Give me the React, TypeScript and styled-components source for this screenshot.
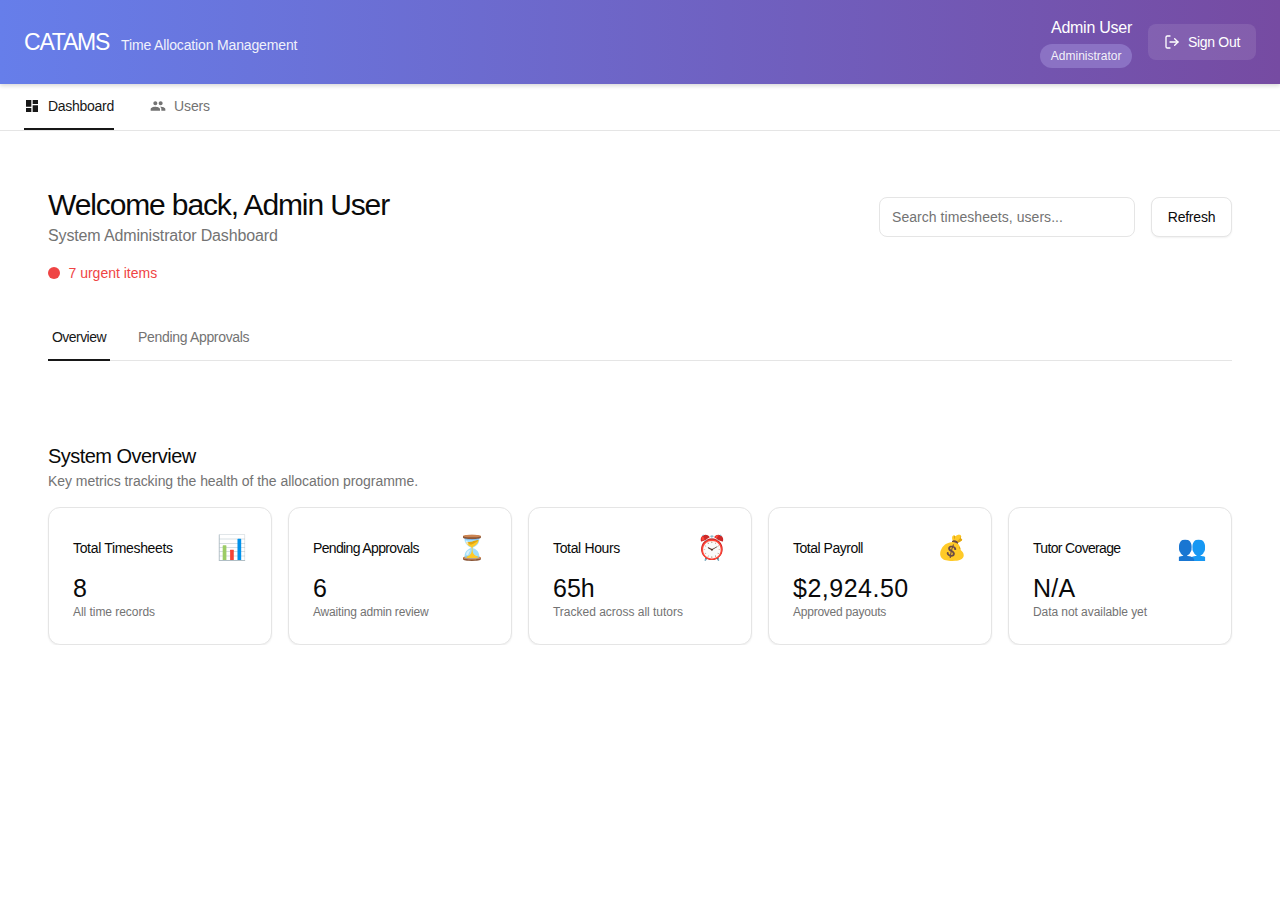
import React from 'react';
import styled, { createGlobalStyle } from 'styled-components';
import { MdDashboard, MdPeople } from 'react-icons/md';

const GlobalStyle = createGlobalStyle`
  *, *::before, *::after { box-sizing: border-box; }
  body {
    margin: 0;
    background: #fff;
    color: #0a0a0a;
    font-family: "Liberation Sans", Arial, sans-serif;
    font-size: 14px;
    line-height: 20px;
  }
  h1, h2, h3, p { margin: 0; font-weight: 400; }
  button, input { font: inherit; }
`;

interface Tracking {
  $track?: number;
}

const Header = styled.header`
  position: relative;
  display: flex;
  align-items: center;
  justify-content: space-between;
  height: 84px;
  padding: 0 24px;
  color: #fff;
  background: linear-gradient(90deg, #667eea 0%, #764ba2 100%);
  box-shadow: 0 2px 4px rgba(0, 0, 0, 0.15);
`;

const Brand = styled.div`
  display: flex;
  align-items: baseline;
  gap: 12px;
`;

const BrandName = styled.h1`
  font-size: 23px;
  line-height: 32px;
  letter-spacing: -1.23px;
`;

const Tagline = styled.span`
  letter-spacing: -0.146px;
  opacity: 0.9;
`;

const Account = styled.div`
  display: flex;
  align-items: center;
  gap: 16px;
`;

const Identity = styled.div`
  display: flex;
  flex-direction: column;
  align-items: flex-end;
  gap: 4px;
`;

const UserName = styled.span`
  font-size: 16px;
  line-height: 24px;
  height: 24px;
  letter-spacing: -0.258px;
`;

const RoleBadge = styled.span`
  display: flex;
  align-items: center;
  height: 24px;
  padding: 0 10.5px;
  border-radius: 12px;
  font-size: 12px;
  color: rgba(255, 255, 255, 0.92);
  background: #8b72c4;
`;

const SignOutButton = styled.button`
  display: flex;
  align-items: center;
  gap: 8px;
  width: 108px;
  height: 36px;
  padding: 0 16px;
  border: 0;
  border-radius: 8px;
  color: #fff;
  white-space: nowrap;
  letter-spacing: -0.309px;
  background: rgba(255, 255, 255, 0.1);
`;

const Nav = styled.nav`
  display: flex;
  gap: 36px;
  height: 47px;
  padding: 0 24px;
  border-bottom: 1px solid #e5e5e5;
`;

const NavItem = styled.a<Tracking & { $active?: boolean }>`
  display: flex;
  align-items: center;
  gap: 8px;
  height: 46px;
  border-bottom: 2px solid ${(p) => (p.$active ? '#171717' : 'transparent')};
  color: ${(p) => (p.$active ? '#171717' : '#737373')};
  letter-spacing: ${(p) => p.$track ?? 0}px;
`;

const Main = styled.main`
  padding: 56px 48px 0;
`;

const PageHeader = styled.section`
  display: flex;
  justify-content: space-between;
  align-items: flex-start;
`;

const PageTitle = styled.h2`
  font-size: 30px;
  line-height: 36px;
  letter-spacing: -1.12px;
`;

const PageSubtitle = styled.p`
  font-size: 16px;
  line-height: 25px;
  color: #737373;
  letter-spacing: -0.14px;
`;

const UrgentNotice = styled.div`
  display: flex;
  align-items: center;
  gap: 8.5px;
  margin-top: 15px;
  color: #ef4444;
`;

const UrgentDot = styled.span`
  width: 12px;
  height: 12px;
  border-radius: 50%;
  background: #ef4444;
`;

const Actions = styled.div`
  display: flex;
  gap: 16px;
  margin-top: 10px;
`;

const SearchInput = styled.input`
  width: 256px;
  height: 40px;
  padding: 0 12px;
  border: 1px solid #e5e5e5;
  border-radius: 8px;
  background: #fff;
  letter-spacing: 0.05px;
  &::placeholder { color: #737373; }
`;

const RefreshButton = styled.button`
  width: 81px;
  height: 40px;
  padding: 0;
  border: 1px solid #e5e5e5;
  border-radius: 8px;
  color: #0a0a0a;
  background: #fff;
  letter-spacing: -0.217px;
  box-shadow: 0 1px 2px rgba(0, 0, 0, 0.06);
`;

const Tabs = styled.div`
  display: flex;
  gap: 24px;
  height: 48px;
  margin-top: 30px;
  border-bottom: 1px solid #e5e5e5;
`;

const Tab = styled.button<Tracking & { $active?: boolean }>`
  height: 48px;
  padding: 2px 4px 0;
  border: 0;
  border-bottom: 2px solid ${(p) => (p.$active ? '#171717' : 'transparent')};
  background: none;
  color: ${(p) => (p.$active ? '#171717' : '#737373')};
  letter-spacing: ${(p) => p.$track ?? 0}px;
`;

const Overview = styled.section`
  margin-top: 81px;
`;

const SectionTitle = styled.h2`
  font-size: 20px;
  line-height: 28px;
  letter-spacing: -0.53px;
`;

const SectionText = styled.p`
  margin-top: 1px;
  color: #737373;
  letter-spacing: -0.046px;
`;

const MetricGrid = styled.div`
  display: grid;
  grid-template-columns: repeat(5, 1fr);
  gap: 16px;
  margin-top: 16px;
`;

const MetricCard = styled.article`
  height: 138px;
  padding: 24px;
  border: 1px solid #e5e5e5;
  border-radius: 12px;
  background: #fff;
  box-shadow: 0 1px 2px rgba(0, 0, 0, 0.07);
`;

const MetricHead = styled.div`
  display: flex;
  align-items: center;
  justify-content: space-between;
  height: 32px;
`;

const MetricName = styled.h3<Tracking>`
  font-size: 14px;
  letter-spacing: ${(p) => p.$track ?? 0}px;
`;

const MetricIcon = styled.span`
  font-size: 24px;
  line-height: 32px;
`;

const MetricValue = styled.div<Tracking>`
  margin-top: 8px;
  font-size: 25px;
  line-height: 32px;
  letter-spacing: ${(p) => p.$track ?? 0}px;
`;

const MetricNote = styled.p<Tracking>`
  font-size: 12px;
  line-height: 16px;
  color: #737373;
  letter-spacing: ${(p) => p.$track ?? 0}px;
`;

const metrics = [
  { name: 'Total Timesheets', icon: '📊', value: '8', note: 'All time records', track: [-0.331, 0, -0.043] },
  { name: 'Pending Approvals', icon: '⏳', value: '6', note: 'Awaiting admin review', track: [-0.648, 0, -0.175] },
  { name: 'Total Hours', icon: '⏰', value: '65h', note: 'Tracked across all tutors', track: [-0.346, 0, -0.011] },
  { name: 'Total Payroll', icon: '💰', value: '$2,924.50', note: 'Approved payouts', track: [-0.481, 0.5, -0.233] },
  { name: 'Tutor Coverage', icon: '👥', value: 'N/A', note: 'Data not available yet', track: [-0.661, 0.3, -0.064] },
];

const SignOutIcon = () => (
  <svg width="16" height="16" viewBox="0 0 24 24" fill="none" stroke="currentColor" strokeWidth="2" strokeLinecap="round" strokeLinejoin="round">
    <path d="M9 21H5a2 2 0 0 1-2-2V5a2 2 0 0 1 2-2h4" />
    <path d="M16 17l5-5-5-5" />
    <path d="M21 12H9" />
  </svg>
);

export default function App() {
  return (
    <>
      <GlobalStyle />
      <Header>
        <Brand>
          <BrandName>CATAMS</BrandName>
          <Tagline>Time Allocation Management</Tagline>
        </Brand>
        <Account>
          <Identity>
            <UserName>Admin User</UserName>
            <RoleBadge>Administrator</RoleBadge>
          </Identity>
          <SignOutButton>
            <SignOutIcon />
            Sign Out
          </SignOutButton>
        </Account>
      </Header>
      <Nav>
        <NavItem $active $track={-0.277}>
          <MdDashboard size={16} />
          Dashboard
        </NavItem>
        <NavItem $track={-0.112}>
          <MdPeople size={16} />
          Users
        </NavItem>
      </Nav>
      <Main>
        <PageHeader>
          <div>
            <PageTitle>Welcome back, Admin User</PageTitle>
            <PageSubtitle>System Administrator Dashboard</PageSubtitle>
            <UrgentNotice>
              <UrgentDot />
              7 urgent items
            </UrgentNotice>
          </div>
          <Actions>
            <SearchInput placeholder="Search timesheets, users..." />
            <RefreshButton>Refresh</RefreshButton>
          </Actions>
        </PageHeader>
        <Tabs>
          <Tab $active $track={-0.543}>Overview</Tab>
          <Tab $track={-0.325}>Pending Approvals</Tab>
        </Tabs>
        <Overview>
          <SectionTitle>System Overview</SectionTitle>
          <SectionText>Key metrics tracking the health of the allocation programme.</SectionText>
          <MetricGrid>
            {metrics.map(({ name, icon, value, note, track }) => (
              <MetricCard key={name}>
                <MetricHead>
                  <MetricName $track={track[0]}>{name}</MetricName>
                  <MetricIcon>{icon}</MetricIcon>
                </MetricHead>
                <MetricValue $track={track[1]}>{value}</MetricValue>
                <MetricNote $track={track[2]}>{note}</MetricNote>
              </MetricCard>
            ))}
          </MetricGrid>
        </Overview>
      </Main>
    </>
  );
}
